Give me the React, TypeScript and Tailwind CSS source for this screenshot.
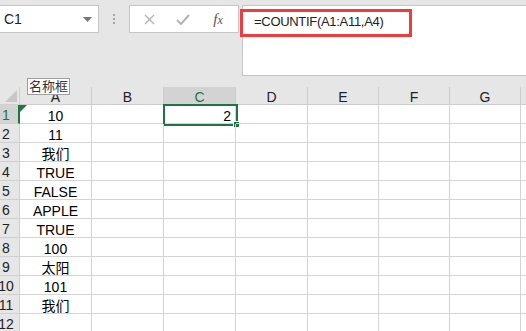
import React from "react";

const cols = [
  { l: "A", w: "w-[72px]" },
  { l: "B", w: "w-[72px]" },
  { l: "C", w: "w-[72px]" },
  { l: "D", w: "w-[72px]" },
  { l: "E", w: "w-[71px]" },
  { l: "F", w: "w-[71px]" },
  { l: "G", w: "w-[71px]" },
  { l: "", w: "w-[20px]" },
];

const dataA = ["10", "11", "我们", "TRUE", "FALSE", "APPLE", "TRUE", "100", "太阳", "101", "我们", ""];

const font = { fontFamily: '"Liberation Sans", "Noto Sans CJK SC", sans-serif' };

export default function App() {
  return (
    <div className="w-[526px] h-[331px] overflow-hidden bg-[#e6e6e6] text-black" style={font}>
      {/* formula bar */}
      <div className="flex h-[87px] pt-[5px] items-start">
        <div className="w-[99px] shrink-0 h-[28px] bg-white border border-[#c6c6c6] border-l-0 flex items-center justify-between pl-[4px] pr-[6px]">
          <span className="text-[14px] text-[#222]">C1</span>
          <svg width="9" height="5" viewBox="0 0 9 5"><path d="M0 0 L9 0 L4.5 5 Z" fill="#777" /></svg>
        </div>
        <div className="w-[30px] shrink-0 h-[28px] flex flex-col items-center justify-center gap-[2px]">
          <div className="w-[2px] h-[2px] bg-[#a6a6a6]" />
          <div className="w-[2px] h-[2px] bg-[#a6a6a6]" />
          <div className="w-[2px] h-[2px] bg-[#a6a6a6]" />
        </div>
        <div className="w-[110px] shrink-0 h-[28px] bg-white border border-[#c6c6c6] flex items-center">
          <div className="w-[38px] flex justify-center">
            <svg width="11" height="11" viewBox="0 0 11 11"><path d="M1 1 L10 10 M10 1 L1 10" stroke="#b4b4b4" strokeWidth="1.4" /></svg>
          </div>
          <div className="w-[30px] flex justify-center">
            <svg width="14" height="11" viewBox="0 0 14 11"><path d="M1 6 L5 10 L13 1" stroke="#b4b4b4" strokeWidth="2" fill="none" /></svg>
          </div>
          <div className="flex-1 flex justify-center">
            <span className="text-[15px] italic text-[#555]" style={{ fontFamily: '"Liberation Serif", serif' }}>
              f<span className="text-[12px]">x</span>
            </span>
          </div>
        </div>
        <div className="ml-[3px] flex-1 h-[71px] bg-white border border-[#c6c6c6] border-r-0 relative">
          <div className="absolute left-[-3px] top-[3px] w-[172px] h-[28px] border-[3px] border-[#f03c3c]" />
          <div className="pl-[11px] pt-[6px] text-[13px] text-[#222] tracking-[-0.3px]">=COUNTIF(A1:A11,A4)</div>
        </div>
      </div>

      {/* header row */}
      <div className="flex h-[18px] relative">
        <div className="w-[20px] shrink-0 h-full border-r border-b border-[#d0d0d0] relative overflow-hidden">
          <svg className="absolute right-[2px] bottom-[2px]" width="12" height="12" viewBox="0 0 12 12"><path d="M12 0 L12 12 L0 12 Z" fill="#c8c8c8" /></svg>
        </div>
        {cols.map((c, i) => (
          <div
            key={i}
            className={`${c.w} shrink-0 h-full border-r border-b border-[#cdcdcd] flex items-center justify-center pt-[3px] text-[14px] ${
              c.l === "C" ? "bg-[#d3d3d3] text-[#217346]" : "text-[#222]"
            }`}
          >
            {c.l}
          </div>
        ))}
        <div className="absolute left-[27px] top-[-9px] px-[1px] h-[17px] bg-white border border-[#9f9f9f] text-[13px] leading-[15px] text-[#333]">
          名称框
        </div>
      </div>

      {/* rows */}
      {dataA.map((v, r) => (
        <div key={r} className="flex h-[19px] bg-white">
          <div
            className={`w-[20px] shrink-0 h-full border-b border-[#d0d0d0] flex items-center pt-[3px] text-[14px] ${
              r === 0 ? "bg-[#d3d3d3] text-[#217346] border-r-2 border-r-[#217346]" : "bg-[#e6e6e6] text-[#222] border-r border-r-[#d0d0d0]"
            }`}
          >
            <div className="w-[12px] flex justify-center whitespace-nowrap">{r + 1}</div>
          </div>
          {cols.map((c, i) => (
            <div key={i} className={`${c.w} shrink-0 h-full border-r border-b border-[#d4d4d4] relative text-[14px] flex items-center pt-[3px]`}>
              {i === 0 && (
                <>
                  {r === 0 && (
                    <svg className="absolute left-0 top-0" width="7" height="7" viewBox="0 0 7 7"><path d="M0 0 L7 0 L0 7 Z" fill="#1d7a3a" /></svg>
                  )}
                  <span className="w-full text-center leading-none">{v}</span>
                </>
              )}
              {i === 2 && r === 0 && (
                <>
                  <span className="w-full text-right pr-[4px] leading-none">2</span>
                  <div className="absolute left-[-1px] top-[-1px] w-[75px] h-[22px] border-2 border-[#217346]" />
                  <div className="absolute left-[69px] top-[16px] w-[7px] h-[7px] bg-[#217346] border border-white" />
                </>
              )}
            </div>
          ))}
        </div>
      ))}
    </div>
  );
}
